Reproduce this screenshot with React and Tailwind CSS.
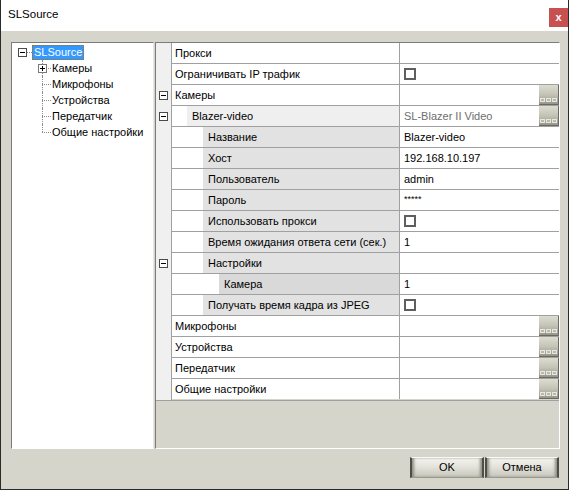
import React from 'react';

const font = { fontFamily: '"Liberation Sans", Arial, sans-serif' };

const rows = [
  { name: 'Прокси', level: 0 },
  { name: 'Ограничивать IP трафик', level: 0, check: true },
  { name: 'Камеры', level: 0, toggle: true, dots: true },
  { name: 'Blazer-video', level: 1, toggle: true, value: 'SL-Blazer II Video', muted: true, dots: true },
  { name: 'Название', level: 2, value: 'Blazer-video' },
  { name: 'Хост', level: 2, value: '192.168.10.197' },
  { name: 'Пользователь', level: 2, value: 'admin' },
  { name: 'Пароль', level: 2, value: '*****', small: true },
  { name: 'Использовать прокси', level: 2, check: true },
  { name: 'Время ожидания ответа сети (сек.)', level: 2, value: '1' },
  { name: 'Настройки', level: 2, toggle: true },
  { name: 'Камера', level: 3, value: '1' },
  { name: 'Получать время кадра из JPEG', level: 2, check: true },
  { name: 'Микрофоны', level: 0, dots: true },
  { name: 'Устройства', level: 0, dots: true },
  { name: 'Передатчик', level: 0, dots: true },
  { name: 'Общие настройки', level: 0, dots: true },
];

const indent = ['pl-[3px]', 'ml-[15px] pl-[5px] bg-[#efefef]', 'ml-[31px] pl-[5px] bg-[#e2e2e2]', 'ml-[47px] pl-[5px] bg-[#d9d9d9]'];

function MinusBox() {
  return (
    <div className="w-[9px] h-[9px] border border-[#4a4a4a] bg-white flex items-center justify-center">
      <div className="w-[5px] h-px bg-black" />
    </div>
  );
}

function PlusBox() {
  return (
    <div className="relative w-[9px] h-[9px] border border-[#7a7a7a] bg-white flex items-center justify-center">
      <div className="w-[5px] h-px bg-black" />
      <div className="absolute left-[3px] top-[1px] w-px h-[5px] bg-black" />
    </div>
  );
}

function DotsButton() {
  return (
    <div className="ml-auto w-[20px] h-[20px] bg-gradient-to-b from-[#dcdcd0] via-[#c4c4b6] to-[#95958a] border-b border-r border-[#6a6a60] flex items-end justify-center gap-px pb-[2px]">
      <div className="w-[5px] h-[4px] border border-[#e8e8e0] bg-[#b8b8ac]" />
      <div className="w-[5px] h-[4px] border border-[#e8e8e0] bg-[#b8b8ac]" />
      <div className="w-[5px] h-[4px] border border-[#e8e8e0] bg-[#b8b8ac]" />
    </div>
  );
}

function Checkbox() {
  return <div className="w-[12px] h-[12px] border-2 border-[#5f5f5f] bg-white" />;
}

function TreeChild({ label, last, plus }) {
  return (
    <div className="flex h-[16px] items-center">
      <div className="relative w-[10px] h-full ml-[30px]">
        <div className={`absolute left-0 top-0 border-l border-dotted border-[#8a8a8a] ${last ? 'h-[8px]' : 'h-full'}`} />
        <div className="absolute left-0 top-[8px] w-[9px] border-t border-dotted border-[#8a8a8a]" />
        {plus && (
          <div className="absolute left-[-4px] top-[4px]">
            <PlusBox />
          </div>
        )}
      </div>
      <span className="text-[11px] leading-none whitespace-nowrap">{label}</span>
    </div>
  );
}

function Tree() {
  return (
    <div className="w-[143px] border-l border-t border-[#7c7c7c] border-r border-b border-r-[#e8e8e2] border-b-white bg-white pt-[1px]">
      <div className="flex h-[16px] items-center pl-[6px]">
        <MinusBox />
        <div className="w-[5px] border-t border-dotted border-[#8a8a8a]" />
        <span className="h-[15px] flex items-center px-[1px] bg-[#3399ff] text-white text-[11px] leading-none border border-dotted border-[#b36b00]">
          SLSource
        </span>
      </div>
      <TreeChild label="Камеры" plus />
      <TreeChild label="Микрофоны" />
      <TreeChild label="Устройства" />
      <TreeChild label="Передатчик" />
      <TreeChild label="Общие настройки" last />
    </div>
  );
}

function Grid() {
  return (
    <div className="w-[405px] flex flex-col border-l border-t border-[#7c7c7c] border-r border-b border-r-white border-b-white bg-[#d5d5cc]">
      <div className="flex flex-col border-b border-[#a0a0a0]">
        {rows.map((r, i) => (
          <div key={i} className="flex h-[21px]">
            <div className="w-[16px] shrink-0 bg-[#f0f0f0] border-r border-[#a0a0a0] flex items-center pl-[3px]">
              {r.toggle && <MinusBox />}
            </div>
            <div className={`flex flex-1 bg-white ${i < rows.length - 1 ? 'border-b border-[#a0a0a0]' : 'h-[20px]'}`}>
              <div className="w-[228px] shrink-0 border-r border-[#a0a0a0] flex">
                <div className={`flex-1 flex items-center text-[11px] whitespace-nowrap ${indent[r.level]}`}>{r.name}</div>
              </div>
              <div className="flex-1 flex items-center pl-[4px] text-[11px] whitespace-nowrap">
                {r.check && <Checkbox />}
                {r.value && (
                  <span className={`${r.muted ? 'text-[#6d6d6d]' : 'text-black'} ${r.small ? 'text-[9px] self-start pt-[3px]' : ''}`}>
                    {r.value}
                  </span>
                )}
                {r.dots && <DotsButton />}
              </div>
            </div>
          </div>
        ))}
      </div>
      <div className="flex-1" />
    </div>
  );
}

function WinButton({ children }) {
  return (
    <button className="w-[74px] h-[21px] text-[11px] text-black bg-gradient-to-b from-[#f4f4ef] via-[#e2e1d9] to-[#c7c6ba] border-x-2 border-[#4e4e48] shadow-[inset_3px_0_3px_-1px_#8d8d84,inset_-3px_0_3px_-1px_#8d8d84] border-t border-t-[#f8f8f4] border-b border-b-[#9a9a90]">
      {children}
    </button>
  );
}

export default function App() {
  return (
    <div className="w-[569px] h-[490px] flex flex-col border-x border-b border-[#2b2b2b] bg-[#d5d5cc] text-black" style={font}>
      <div className="h-[31px] shrink-0 bg-white flex items-start">
        <span className="pl-[7px] pt-[9px] text-[11.5px] leading-none">SLSource</span>
        <div className="ml-auto mt-[8px] w-[19px] h-[19px] bg-[#c75050] flex items-center justify-center text-white text-[11px] font-bold leading-none">
          x
        </div>
      </div>
      <div className="flex flex-1 flex-col">
        <div className="flex gap-px pl-[10px] pt-[11px] h-[418px]">
          <Tree />
          <Grid />
        </div>
        <div className="flex justify-end gap-px pr-[9px] pt-[8px]">
          <WinButton>OK</WinButton>
          <WinButton>Отмена</WinButton>
        </div>
      </div>
    </div>
  );
}
